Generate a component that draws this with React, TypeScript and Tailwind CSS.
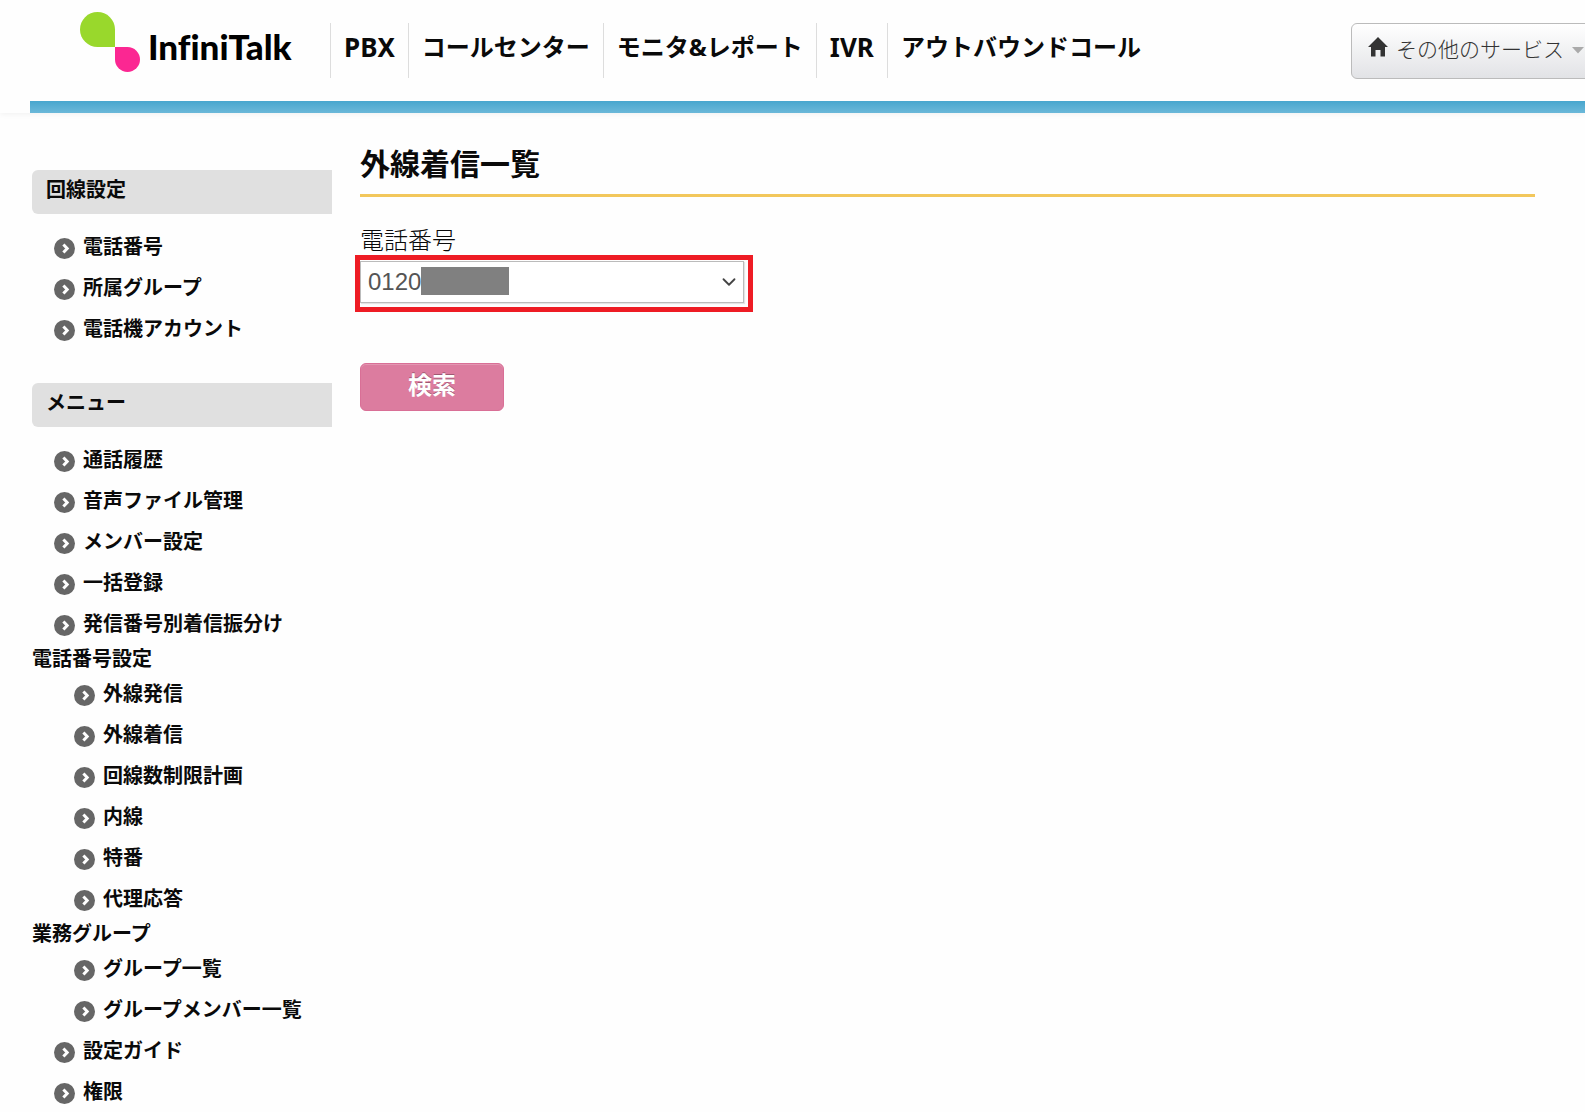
import { ChevronDown } from 'lucide-react';
import { clsx } from 'clsx';

interface MenuGroup {
  label?: string;
  items: string[];
}

interface MenuSection {
  title: string;
  groups: MenuGroup[];
}

const navItems = [
  { label: 'PBX', latin: true },
  { label: 'コールセンター' },
  { label: 'モニタ&レポート' },
  { label: 'IVR', latin: true },
  { label: 'アウトバウンドコール' },
];

const sections: MenuSection[] = [
  {
    title: '回線設定',
    groups: [{ items: ['電話番号', '所属グループ', '電話機アカウント'] }],
  },
  {
    title: 'メニュー',
    groups: [
      { items: ['通話履歴', '音声ファイル管理', 'メンバー設定', '一括登録', '発信番号別着信振分け'] },
      {
        label: '電話番号設定',
        items: ['外線発信', '外線着信', '回線数制限計画', '内線', '特番', '代理応答'],
      },
      { label: '業務グループ', items: ['グループ一覧', 'グループメンバー一覧'] },
      { items: ['設定ガイド', '権限'] },
    ],
  },
];

function Logo() {
  return (
    <a href="#" className="flex items-start">
      <svg width="60" height="60" viewBox="0 0 60 60" aria-hidden="true">
        <path d="M17.5 0A17.5 17.5 0 0 1 35 17.5V35H17.5A17.5 17.5 0 0 1 17.5 0Z" fill="#99d82c" />
        <path d="M35 35H47.5A12.5 12.5 0 1 1 35 47.5Z" fill="#fb2792" />
      </svg>
      <span className="mt-[14px] ml-2 font-['Lato'] text-[35px] leading-10 font-black text-black [font-variant-ligatures:none]">
        InfiniTalk
      </span>
    </a>
  );
}

function ArrowIcon() {
  return (
    <svg width="21" height="21" viewBox="0 0 21 21" className="mt-1 shrink-0" aria-hidden="true">
      <circle cx="10.5" cy="10.5" r="10.5" fill="#666" />
      <path d="M9.4 6.4 13.2 10.5 9.4 14.6" fill="none" stroke="#fff" strokeWidth="3" />
    </svg>
  );
}

function Header() {
  return (
    <header className="overflow-x-clip shadow-[0_1px_6px_rgba(0,0,0,0.06)]">
      <div className="flex h-[101px] items-start pl-20">
        <div className="w-[250px] shrink-0 pt-3">
          <Logo />
        </div>
        <nav className="mt-[23px] flex shrink-0" aria-label="サービス">
          {navItems.map((item) => (
            <a
              key={item.label}
              href="#"
              className={clsx(
                'h-[55px] border-l border-[#ddd] px-[13px] leading-[48px] font-bold whitespace-nowrap text-[#0a0a0a]',
                item.latin ? 'text-[26px]' : 'text-[24px]'
              )}
            >
              {item.label}
            </a>
          ))}
        </nav>
        <button
          type="button"
          className="mt-[23px] -mr-3 ml-auto flex h-14 shrink-0 items-center rounded-md border border-[#bbb] bg-linear-to-b from-white to-[#e2e3e6] pr-3 pb-0.5 pl-4 text-[21px] font-light whitespace-nowrap text-[#333]"
        >
          <svg width="20" height="20" viewBox="0 0 20 20" className="mr-2 mb-1.5" aria-hidden="true">
            <path d="M10 0 20 10H17V19.5H12.5V13H7.5V19.5H3V10H0Z" fill="#333" />
          </svg>
          その他のサービス
          <svg width="12" height="7" viewBox="0 0 12 7" className="ml-2" aria-hidden="true">
            <path d="M0 0H12L6 6.5Z" fill="#aaa" />
          </svg>
        </button>
      </div>
      <div className="ml-[30px] h-3 bg-linear-to-b from-[#47a6ce] to-[#6bb8d9]" />
    </header>
  );
}

function Sidebar() {
  return (
    <aside className="w-[300px] shrink-0 pt-[57px] text-[#0a0a0a]">
      {sections.map((section) => (
        <section key={section.title} className="mb-[34px]">
          <h2 className="mb-3 h-11 rounded-l-md bg-[#e0e0e0] pl-[14px] text-xl leading-10 font-bold">
            {section.title}
          </h2>
          {section.groups.map((group) => (
            <div key={group.items[0]}>
              {group.label && (
                <h3 className="text-xl leading-[29px] font-bold">{group.label}</h3>
              )}
              <ul className={clsx(group.label ? 'pl-[42px]' : 'pl-[22px]')}>
                {group.items.map((item) => (
                  <li key={item}>
                    <a
                      href="#"
                      className="flex h-[41px] items-center gap-2 text-xl font-bold whitespace-nowrap"
                    >
                      <ArrowIcon />
                      {item}
                    </a>
                  </li>
                ))}
              </ul>
            </div>
          ))}
        </section>
      ))}
    </aside>
  );
}

function SearchForm() {
  return (
    <form className="mt-[27px]" onSubmit={(e) => e.preventDefault()}>
      <label htmlFor="phone" className="block text-2xl leading-[31px] font-light text-[#0a0a0a]">
        電話番号
      </label>
      <div className="relative -ml-[5px] w-[398px] border-[5px] border-[#ee1c24] pt-px pr-1 pb-1">
        <select
          id="phone"
          className="block h-[42px] w-full appearance-none border border-[#bbb] bg-white pl-[7px] font-['Liberation_Sans'] text-2xl text-[#555] shadow-[1px_1px_1px_rgba(0,0,0,0.1)]"
        >
          <option>0120</option>
        </select>
        {/* masked part of the number */}
        <span className="pointer-events-none absolute top-[7px] left-[61px] h-7 w-[88px] bg-[#808080]" />
        <ChevronDown
          size={22}
          strokeWidth={2}
          className="pointer-events-none absolute top-[11px] right-2 text-[#444]"
        />
      </div>
      <button
        type="submit"
        className="mt-[51px] h-12 w-36 rounded-md border border-[#d96f96] bg-[#dc7c9f] pb-1 text-2xl font-bold text-white shadow-[inset_0_1px_0_rgba(255,255,255,0.2)] text-shadow-[0_-1px_0_rgba(0,0,0,0.3)]"
      >
        検索
      </button>
    </form>
  );
}

export default function App() {
  return (
    <div className="min-h-screen overflow-x-clip bg-[#fefefe] font-['Noto_Sans','Noto_Sans_CJK_JP',sans-serif]">
      <Header />
      <div className="flex gap-7 pr-[50px] pl-8">
        <Sidebar />
        <main className="min-w-0 flex-1 pt-7">
          <h1 className="border-b-[3px] border-[#f2c75c] pb-[7px] text-[30px] leading-[46px] font-bold text-[#0a0a0a]">
            外線着信一覧
          </h1>
          <SearchForm />
        </main>
      </div>
    </div>
  );
}
